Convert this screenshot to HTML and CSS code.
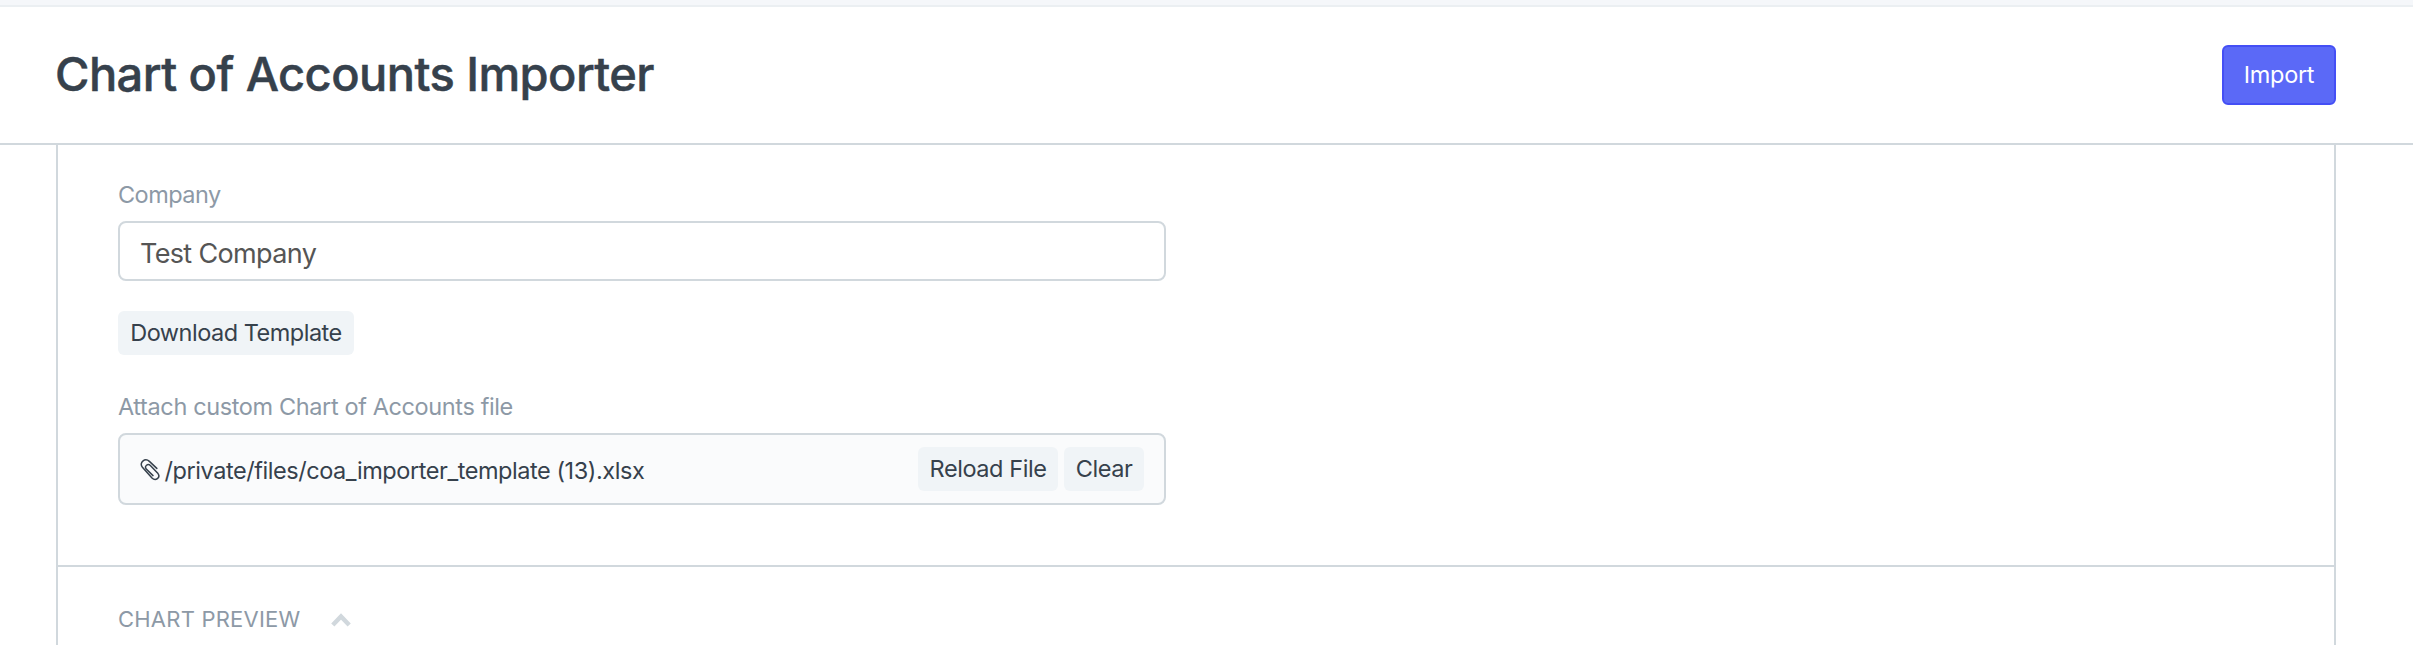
FILE: index.html
```html
<!DOCTYPE html>
<html lang="en">
<head>
<meta charset="utf-8">
<title>Chart of Accounts Importer</title>
<link rel="stylesheet" href="styles.css">
</head>
<body>
<div class="navbar-edge"></div>
<header class="page-head">
  <h1 class="title"><span>Chart of Accounts Importer</span></h1>
  <button class="btn btn-primary"><span>Import</span></button>
</header>
<main class="layout">
  <section class="section">
    <label class="label label-company"><span>Company</span></label>
    <div class="input"><span>Test Company</span></div>
    <button class="btn btn-light btn-download"><span>Download Template</span></button>
    <label class="label label-attach"><span>Attach custom Chart of Accounts file</span></label>
    <div class="attached">
      <svg class="clip" viewBox="0 0 20 22" width="20" height="22"><path d="M16.8 9.4 9.4 2.4C5-1.6-1.4 3.6 2.4 8.2L12 18.9C15.6 22.6 20.8 18.4 18 14.6L10.6 6.8C7.8 4 4 7 6.3 10.1L13 16.6"/></svg>
      <a class="file"><span>/private/files/coa_importer_template (13).xlsx</span></a>
      <div class="actions">
        <button class="btn btn-light btn-reload"><span>Reload File</span></button>
        <button class="btn btn-light btn-clear"><span>Clear</span></button>
      </div>
    </div>
  </section>
  <section class="preview">
    <span class="preview-title">CHART PREVIEW</span>
    <svg class="chevron" viewBox="0 0 20 14" width="20" height="14"><path d="M1.8 12 10 3.4 18.2 12"/></svg>
  </section>
</main>
</body>
</html>
```
FILE: styles.css
```css
* { box-sizing: border-box; }
html, body { height: 100%; }
body {
  margin: 0;
  display: flex;
  flex-direction: column;
  overflow: hidden;
  background: #fff;
  color: #36414c;
  font-family: Inter, "Liberation Sans", sans-serif;
  font-size: 23.5px;
  letter-spacing: -0.44px;
}
.navbar-edge { height: 7px; flex: none; background: #f5f7fa; border-bottom: 2px solid #ebeff2; }
.page-head {
  height: 138px;
  flex: none;
  display: flex;
  align-items: center;
  justify-content: space-between;
  padding: 0 77px 0 55px;
  border-bottom: 2px solid #d1d8dd;
}
.title { margin: 0 0 2px; font-size: 47px; line-height: 60px; font-weight: 500; letter-spacing: -0.56px; -webkit-text-stroke: 0.5px #36414c; white-space: nowrap; }
.btn {
  display: flex;
  align-items: center;
  justify-content: center;
  border: 0;
  border-radius: 6px;
  padding: 0;
  font: inherit;
  letter-spacing: inherit;
  line-height: 30px;
  white-space: nowrap;
  color: #36414c;
}
.btn-primary { width: 114px; height: 60px; background: #5b69f7; border: 2px solid #444ff5; color: #fff; letter-spacing: -0.3px; }
.btn-light { height: 44px; background: #f0f4f7; }
.layout {
  flex: 1;
  margin: 0 77px 0 56px;
  border: solid #d1d8dd;
  border-width: 0 2px;
}
.section {
  height: 422px;
  padding: 35px 0 0 60px;
  border-bottom: 2px solid #d1d8dd;
}
.label { display: block; line-height: 30px; color: #8d99a6; white-space: nowrap; letter-spacing: -0.38px; }
.label-company { letter-spacing: -0.55px; }
.input {
  width: 1048px;
  height: 60px;
  margin-top: 11px;
  padding: 4px 0 0 20px;
  display: flex;
  align-items: center;
  border: 2px solid #d1d8dd;
  border-radius: 8px;
  color: #555;
  font-size: 27px;
  letter-spacing: -0.65px;
}
.btn-download { width: 236px; margin-top: 30px; letter-spacing: -0.5px; }
.label-attach { margin-top: 37px; }
.attached {
  width: 1048px;
  height: 72px;
  margin-top: 11px;
  padding: 0 20px;
  display: flex;
  align-items: center;
  border: 2px solid #d1d8dd;
  border-radius: 8px;
  background: #fafbfc;
}
.clip { flex: none; margin-top: 2px; }
.clip path { fill: none; stroke: #36414c; stroke-width: 1.5; stroke-linecap: round; }
.file { margin: 2px 0 0 4.5px; white-space: nowrap; }
.actions { display: flex; gap: 6px; margin-left: auto; }
.btn-reload { width: 140px; }
.btn-clear { width: 80px; }
.preview { display: flex; align-items: center; padding: 37px 0 0 60px; height: 67px; color: #8d99a6; }
.preview-title { font-size: 22px; line-height: 30px; white-space: nowrap; letter-spacing: 0.22px; }
.chevron { margin: 2px 0 0 31px; }
.chevron path { fill: none; stroke: #d1d8dd; stroke-width: 4.4; }
```
